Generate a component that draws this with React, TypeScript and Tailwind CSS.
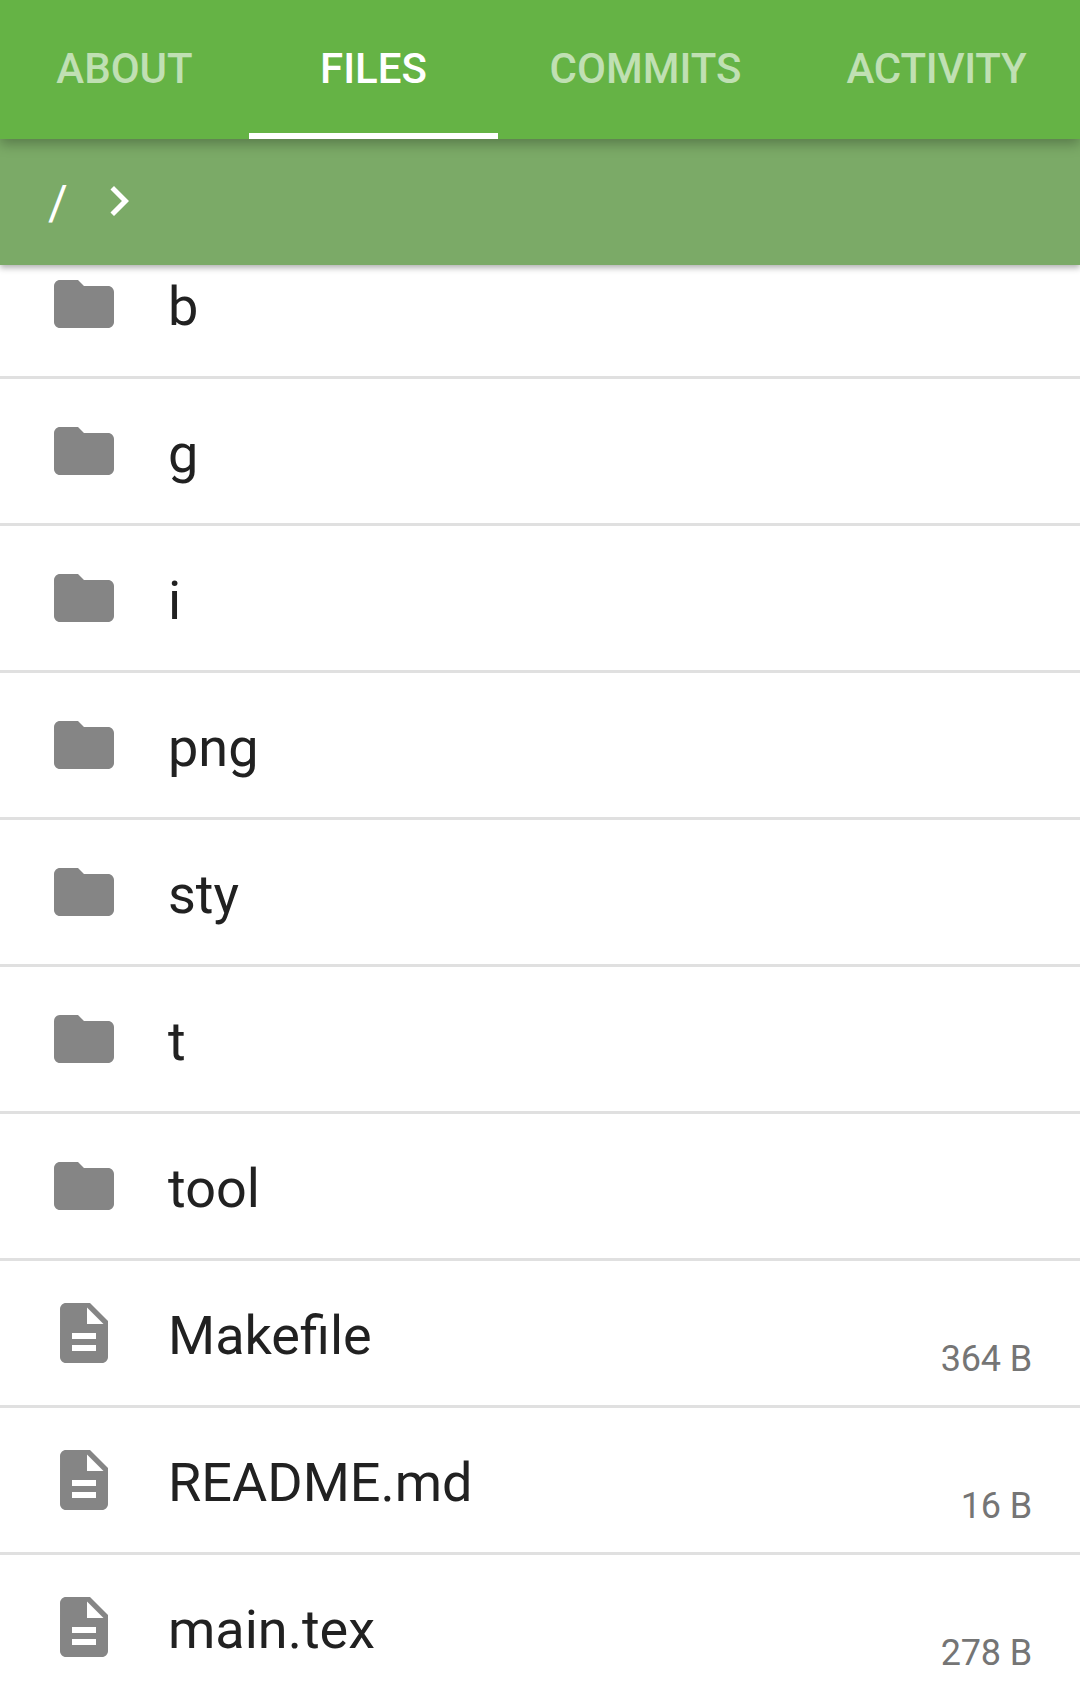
type IconProps = { d: string };

const FOLDER = "M10 4H4c-1.1 0-1.99.9-1.99 2L2 18c0 1.1.9 2 2 2h16c1.1 0 2-.9 2-2V8c0-1.1-.9-2-2-2h-8l-2-2z";
const FILE =
  "M14 2H6c-1.1 0-1.99.9-1.99 2L4 20c0 1.1.89 2 1.99 2H18c1.1 0 2-.9 2-2V8l-6-6zm2 16H8v-2h8v2zm0-4H8v-2h8v2zm-3-5V3.5L18.5 9H13z";

const tabs = [
  { label: "ABOUT", width: "w-[249px]" },
  { label: "FILES", width: "w-[249px]", active: true },
  { label: "COMMITS", width: "w-[295px]" },
  { label: "ACTIVITY", width: "w-[287px] tracking-[-0.25px]" },
];

const entries: { name: string; size?: string }[] = [
  { name: "b" },
  { name: "g" },
  { name: "i" },
  { name: "png" },
  { name: "sty" },
  { name: "t" },
  { name: "tool" },
  { name: "Makefile", size: "364 B" },
  { name: "README.md", size: "16 B" },
  { name: "main.tex", size: "278 B" },
];

function Icon({ d }: IconProps) {
  return (
    <svg viewBox="0 0 24 24" className="size-[72px] shrink-0 fill-[#858585]">
      <path d={d} />
    </svg>
  );
}

export default function App() {
  return (
    <div className="flex h-[1699px] w-[1080px] flex-col overflow-hidden bg-white font-['Roboto',sans-serif]">
      <nav className="z-20 flex h-[139px] shrink-0 bg-[#65b345] shadow-[0_5px_12px_rgba(0,0,0,0.28)]">
        {tabs.map((t) => (
          <div
            key={t.label}
            className={`${t.width} flex shrink-0 justify-center border-b-6 pt-[44px] text-[42px] leading-[50px] font-medium ${
              t.active ? "border-white text-white" : "border-transparent text-white/60"
            }`}
          >
            {t.label}
          </div>
        ))}
      </nav>
      <div className="z-10 flex h-[126px] shrink-0 items-start bg-[#7baa67] pl-12 text-[48px] text-white shadow-[0_3px_6px_rgba(0,0,0,0.3)]">
        <span className="pt-[36px] leading-[56px]">/</span>
        <svg viewBox="0 0 24 24" className="mt-[31.5px] ml-[21px] size-[60px] fill-white">
          <path d="M10 6L8.59 7.41 13.17 12l-4.58 4.59L10 18l6-6z" />
        </svg>
      </div>
      <ul className="-mt-[33px]">
        {entries.map((e) => (
          <li key={e.name} className="flex h-[147px] border-b-3 border-[#e0e0e0] px-12 pt-9">
            <Icon d={e.size ? FILE : FOLDER} />
            <span className="ml-12 grow pt-[7px] text-[54px] leading-[64px] text-[#212121]">{e.name}</span>
            {e.size && (
              <span className="pt-[41px] text-[36px] leading-[42px] tracking-[-0.15px] text-[#757575]">{e.size}</span>
            )}
          </li>
        ))}
      </ul>
    </div>
  );
}
